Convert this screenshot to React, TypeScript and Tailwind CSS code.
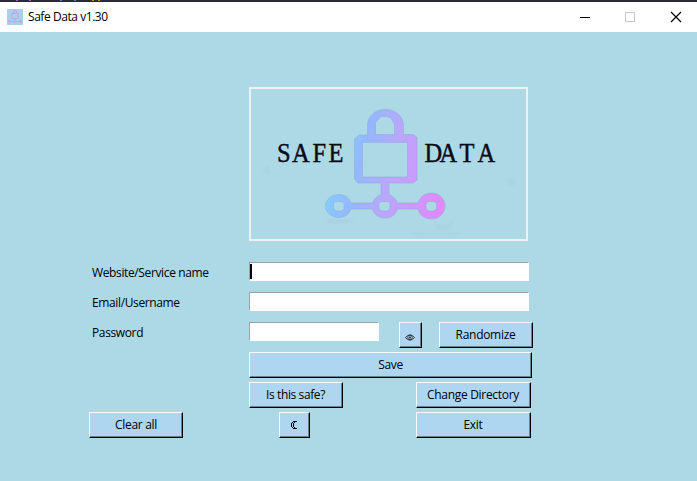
import type { ReactNode } from "react";

function Button({ className, children }: { className: string; children: ReactNode }) {
  return (
    <button
      className={`flex h-[26px] shrink-0 items-center justify-center border border-t-[#f4fcff] border-l-[#f4fcff] border-r-black border-b-black bg-[#aed6f1] pb-px whitespace-nowrap shadow-[inset_-1px_-1px_0_#68808f] ${className}`}
    >
      {children}
    </button>
  );
}

function Field({ className, caret = false }: { className: string; caret?: boolean }) {
  return (
    <div className={`h-[19px] border border-t-[#a0a0a0] border-l-[#a0a0a0] border-r-white border-b-white bg-white pt-px ${className}`}>
      {caret && <div className="h-[15px] w-[2px] bg-black" />}
    </div>
  );
}

function Label({ children }: { children: ReactNode }) {
  return (
    <div className="w-[157px] shrink-0 pt-[2px] leading-[18px] tracking-[-0.37px] whitespace-nowrap">
      {children}
    </div>
  );
}

function LockShapes() {
  return (
    <path
      fillRule="evenodd"
      d="M118.5 48V39C118.5 29 126 22.5 136.500 22.300C147 22.500 154.500 30 154.500 39V47.500H164L168 50.500V93L164.500 96H140V107.500C144 109 147 112 148.500 116H169C171 109.500 176 106 182.500 106C190 106 196 112 196 119C196 126 190 132 182.500 132C176 132 171 128.500 169 122H148.500C147 127.500 142.500 131 136 131C129.500 131 125 127.500 123.500 122H102C100 127.500 95.500 130.500 90 130.500C83 130.500 76.500 125.500 76.500 119C76.500 112.500 83 107.500 90 107.500C95.500 107.500 100 110.500 102 116H123.500C125 112 128 109 132 107.500V96H109L105.500 92.500V52L110 48ZM126.500 47.500H145.500V37L142 31L138 29.500H132L126.500 35.500ZM113.500 55.500V90H158.500V55.500ZM86 114.500L84.500 116.500V121.500L87 124H93L95 121.500V116.500L93 114.500ZM132 114.500L130 116.500V121.500L132.500 124H138.500L141 121.500V116.500L139 114.500ZM179 114.500L177 117V122L180 124H185L187.500 121.500V116.500L185 114.500Z"
    />
  );
}

function Logo() {
  return (
    <svg width="275" height="150" viewBox="2 2 275 150" className="block">
      <defs>
        <linearGradient id="lock" gradientUnits="userSpaceOnUse" x1="77" y1="105" x2="184" y2="131">
          <stop offset="0" stopColor="#81cfff" />
          <stop offset=".25" stopColor="#95b7ff" />
          <stop offset=".55" stopColor="#bba6fb" />
          <stop offset=".8" stopColor="#ce98fc" />
          <stop offset="1" stopColor="#de8bf8" />
        </linearGradient>
        <filter id="smudge" x="-50%" y="-100%" width="200%" height="300%">
          <feGaussianBlur stdDeviation="1.2" />
        </filter>
      </defs>
      <g fill="#9fcadf" opacity=".35" filter="url(#smudge)">
        <ellipse cx="18" cy="83" rx="3" ry="4" />
        <ellipse cx="262" cy="95" rx="5" ry="3" />
        <ellipse cx="91" cy="134" rx="14" ry="2" />
        <path d="M184 134q16 10 20-4q2 14-14 14M165 146q20 4 45-1v3h-45Z" />
      </g>
      <g fill="url(#lock)" stroke="#8faada" strokeWidth=".55">
        <LockShapes />
      </g>
      <g
        transform="scale(1 1.08)"
        fontFamily="'Liberation Serif', serif"
        fontSize="24.5"
        fill="#090b16"
        stroke="#090b16"
        strokeWidth=".4"
      >
        <text x="28 43 63.5 79.5" y="69.200">SAFE</text>
        <text x="175.5 190.5 210.5 228.5" y="69.200">DATA</text>
      </g>
      <g fill="none" stroke="#10122a" strokeWidth=".8">
        <path d="M47.500 66l4 3.500 4-3.500M195 66l4 3.500 4-3.500M233 66l4 3.500 4-3.500" />
      </g>
    </svg>
  );
}

function TitleBar() {
  return (
    <div className="flex h-[30px] items-center bg-white">
      <svg width="16" height="16" viewBox="0 0 16 16" className="ml-[7px] shrink-0">
        <path fill="#a9d3e5" d="M0 0h16v16H0z" />
        <g transform="translate(-8 -1.500) scale(.117)" fill="#bda0f5">
          <LockShapes />
        </g>
      </svg>
      <span className="ml-[5px] tracking-[-0.44px]">Safe Data v1.30</span>
      <svg width="106" height="12" viewBox="0 0 106 12" className="mr-[13px] ml-auto" fill="none" shapeRendering="crispEdges">
        <path d="M2 6.500h10" stroke="#000" />
        <path d="M47.500 1.500h9v9h-9z" stroke="#c8c8c8" />
        <path d="M93 1l10 10M103 1L93 11" stroke="#000" shapeRendering="auto" strokeWidth="1.200" />
      </svg>
    </div>
  );
}

export default function App() {
  return (
    <div className="h-[481px] w-[697px] overflow-hidden bg-[#add8e6] font-['Open_Sans','Noto_Sans',sans-serif] text-[12px] text-black">
      <div className="flex h-[2px] bg-[#29293a]">
        <div className="ml-[16px] h-px w-[2px] bg-[#9b65bd]" />
        <div className="ml-[11px] h-px w-[2px] bg-[#9b65bd]" />
        <div className="ml-[29px] h-px w-[2px] bg-[#4e83ca]" />
        <div className="ml-[12px] h-px w-[2px] bg-[#4e83ca]" />
        <div className="ml-[16px] h-px w-[2px] bg-[#b99b28]" />
        <div className="ml-[4px] h-px w-[2px] bg-[#b99b28]" />
      </div>
      <TitleBar />
      <div className="mt-[55px] ml-[249px] h-[154px] w-[279px] border-2 border-[#f0f0f0]">
        <Logo />
      </div>
      <div className="mt-[21px] ml-[92px]">
        <div className="flex h-[30px]">
          <Label>Website/Service name</Label>
          <Field className="w-[280px]" caret />
        </div>
        <div className="flex h-[30px]">
          <Label>Email/Username</Label>
          <Field className="w-[280px]" />
        </div>
        <div className="flex h-[30px]">
          <Label>Password</Label>
          <Field className="w-[130px]" />
          <Button className="ml-[20px] w-[23px]">
            <svg width="10" height="9" viewBox="0 0 10 9" fill="none" stroke="#222" className="mt-[5px] mr-px">
              <path d="M.4 4.500Q5-.8 9.600 4.500Q5 9.800.4 4.500Z" strokeWidth=".8" />
              <circle cx="5" cy="4.500" r="2.300" strokeWidth=".8" />
              <circle cx="5" cy="4.500" r=".9" fill="#111" stroke="none" />
            </svg>
          </Button>
          <Button className="ml-[17px] w-[94px] pr-px tracking-[-0.3px]">Randomize</Button>
        </div>
      </div>
      <Button className="ml-[249px] w-[283px] tracking-[-0.32px]">Save</Button>
      <div className="mt-[4px] ml-[249px] flex">
        <Button className="w-[94px] pr-px tracking-[-0.4px]">Is this safe?</Button>
        <Button className="ml-[73px] w-[115px] pr-px tracking-[-0.3px]">Change Directory</Button>
      </div>
      <div className="mt-[4px] ml-[89px] flex">
        <Button className="w-[94px] tracking-[-0.3px]">Clear all</Button>
        <Button className="ml-[96px] w-[31px]">
          <svg width="7" height="8" viewBox="0 0 7 8" fill="#000" className="mt-px mr-px" shapeRendering="crispEdges">
            <path d="M2 0h4v1H2zM1 1h1v1H1zM3 1h1v1H3zM0 2h1v4H0zM2 2h1v4H2zM1 6h1v1H1zM3 6h1v1H3zM2 7h4v1H2z" />
          </svg>
        </Button>
        <Button className="ml-[106px] w-[115px] pr-px tracking-[-0.3px]">Exit</Button>
      </div>
    </div>
  );
}
